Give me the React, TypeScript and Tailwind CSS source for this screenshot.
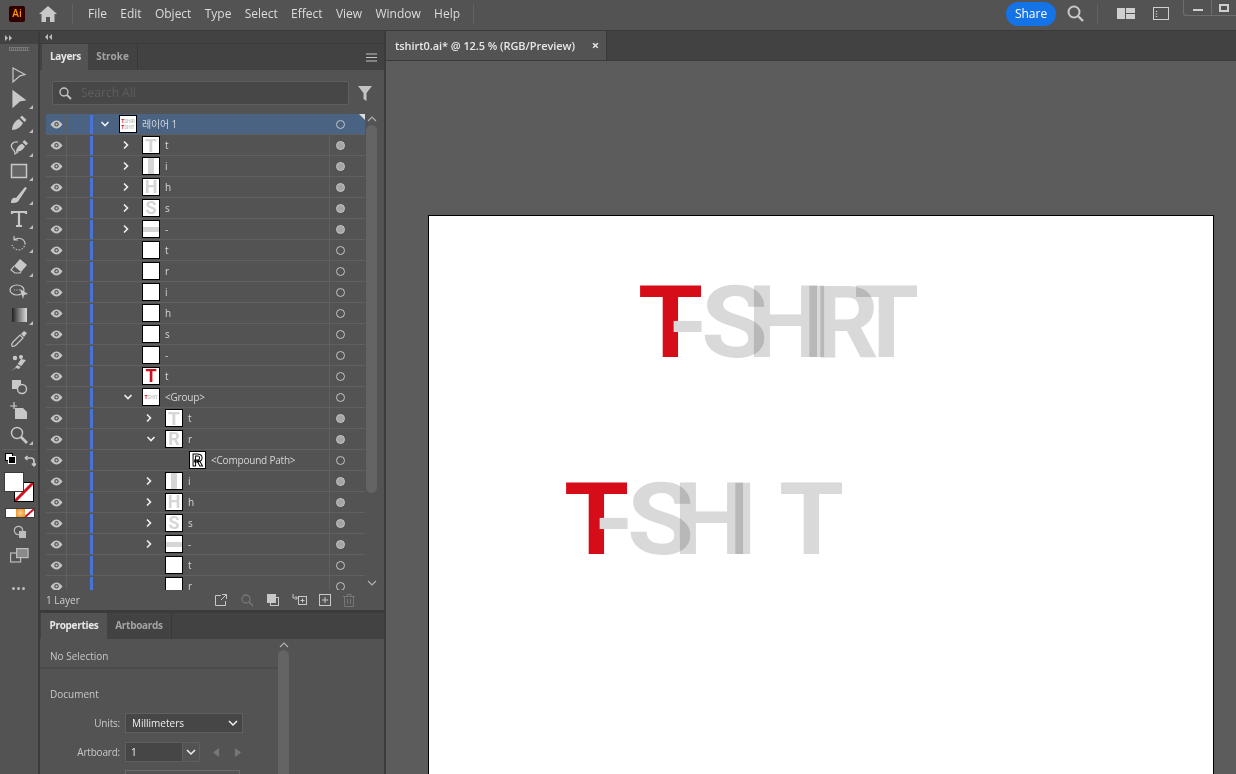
import type { ReactNode } from "react";

const UI = "font-['Open_Sans','Noto_Sans_CJK_KR',sans-serif]";

type Thumb = "blank" | "T" | "I" | "H" | "S" | "-" | "red" | "R" | "layer" | "group" | "path";
type Row = { level: 0 | 1 | 2 | 3; open?: boolean; shut?: boolean; thumb: Thumb; label: string; filled?: boolean };

const rows: Row[] = [
  { level: 0, open: true, thumb: "layer", label: "레이어 1" },
  { level: 1, shut: true, thumb: "T", label: "t", filled: true },
  { level: 1, shut: true, thumb: "I", label: "i", filled: true },
  { level: 1, shut: true, thumb: "H", label: "h", filled: true },
  { level: 1, shut: true, thumb: "S", label: "s", filled: true },
  { level: 1, shut: true, thumb: "-", label: "-", filled: true },
  { level: 1, thumb: "blank", label: "t" },
  { level: 1, thumb: "blank", label: "r" },
  { level: 1, thumb: "blank", label: "i" },
  { level: 1, thumb: "blank", label: "h" },
  { level: 1, thumb: "blank", label: "s" },
  { level: 1, thumb: "blank", label: "-" },
  { level: 1, thumb: "red", label: "t" },
  { level: 1, open: true, thumb: "group", label: "<Group>" },
  { level: 2, shut: true, thumb: "T", label: "t", filled: true },
  { level: 2, open: true, thumb: "R", label: "r", filled: true },
  { level: 3, thumb: "path", label: "<Compound Path>" },
  { level: 2, shut: true, thumb: "I", label: "i", filled: true },
  { level: 2, shut: true, thumb: "H", label: "h", filled: true },
  { level: 2, shut: true, thumb: "S", label: "s", filled: true },
  { level: 2, shut: true, thumb: "-", label: "-", filled: true },
  { level: 2, thumb: "blank", label: "t" },
  { level: 2, thumb: "blank", label: "r" },
];

const indent = {
  0: "pl-[5px]",
  1: "pl-[26px]",
  2: "pl-[49px]",
  3: "pl-[96px]",
};
const chevronBox = { 0: "w-[21px]", 1: "w-[23px]", 2: "w-[23px]", 3: "w-0" };
const thumbLetter = "font-['Roboto',sans-serif] font-bold text-[#d6d6d6] leading-none";

function ThumbBox({ kind, level }: { kind: Thumb; level: number }) {
  const size = level >= 3 ? "w-[17px] h-[18px]" : "w-[18px] h-[18px]";
  return (
    <div className={`${size} shrink-0 bg-white border border-black flex items-center justify-center overflow-hidden`}>
      {kind === "T" && <span className={`${thumbLetter} text-[19px]`}>T</span>}
      {kind === "I" && <div className="w-[6px] h-full bg-[#d6d6d6]" />}
      {kind === "H" && <span className={`${thumbLetter} text-[18px]`}>H</span>}
      {kind === "S" && <span className={`${thumbLetter} text-[18px]`}>S</span>}
      {kind === "R" && <span className={`${thumbLetter} text-[18px]`}>R</span>}
      {kind === "-" && <div className="w-full h-[5px] bg-[#d6d6d6]" />}
      {kind === "red" && <span className="font-['Roboto',sans-serif] font-bold text-[#d20f1c] text-[18px] leading-none">T</span>}
      {kind === "path" && (
        <span className="font-['Roboto',sans-serif] font-bold text-white text-[17px] leading-none [-webkit-text-stroke:1px_black]">R</span>
      )}
      {(kind === "layer" || kind === "group") && (
        <div className="flex flex-col font-['Roboto',sans-serif] font-bold text-[5px] leading-[6px] text-[#c9c9c9] tracking-[-0.2px]">
          {kind === "layer" && (
            <span>
              <span className="text-[#d20f1c]">T</span>SHIR
            </span>
          )}
          <span>
            <span className="text-[#d20f1c]">T</span>SHIT
          </span>
        </div>
      )}
    </div>
  );
}

function Eye() {
  return (
    <svg width="13" height="9" viewBox="0 0 13 9">
      <path d="M0.5 4.5C2.5 1.6 4.4 0.5 6.5 0.5s4 1.1 6 4c-2 2.9-3.9 4-6 4s-4-1.1-6-4z" fill="#c4c4c4" />
      <circle cx="6.5" cy="4.3" r="2.2" fill="#555" />
      <circle cx="6.5" cy="4.3" r="1.1" fill="#c4c4c4" />
    </svg>
  );
}

function Chevron({ open, nudge }: { open?: boolean; nudge?: boolean }) {
  return (
    <div className={`w-[14px] flex justify-center ${nudge ? "ml-[2px]" : ""}`}>
      <svg width="10" height="10" viewBox="0 0 10 10" fill="none" stroke="#f0f0f0" strokeWidth="1.6">
        {open ? <path d="M1.5 3l3.5 3.5L8.5 3" /> : <path d="M3 1.5L6.5 5 3 8.5" />}
      </svg>
    </div>
  );
}

function LayerRow({ row, selected }: { row: Row; selected: boolean }) {
  return (
    <div className={`relative h-[21px] shrink-0 flex items-center border-b border-[#606060] ${selected ? "bg-[#4b6382]" : ""}`}>
      <div className="w-[21px] h-full flex items-center justify-center border-r border-[#606060]">
        <Eye />
      </div>
      <div className="w-[21px] h-full border-r border-transparent" />
      <div className="w-[3px] h-[19px] ml-[2px] bg-[#4a73d8]" />
      <div className={`flex-1 h-full flex items-center min-w-0 ${indent[row.level]}`}>
        <div className={`${chevronBox[row.level]} shrink-0`}>
          {row.open || row.shut ? <Chevron open={row.open} nudge={row.open && row.level > 0} /> : null}
        </div>
        <ThumbBox kind={row.thumb} level={row.level} />
        <span className={`ml-[5px] text-[10px] tracking-[-0.2px] whitespace-nowrap ${selected ? "text-[#cfd6df]" : "text-[#d6d6d6]"}`}>
          {row.label}
        </span>
      </div>
      <div className={`w-[36px] h-full flex items-center pl-[6px] border-l ${selected ? "border-transparent" : "border-[#606060]"}`}>
        <div className={`w-[9px] h-[9px] rounded-full border border-[#c4c4c4] ${row.filled ? "bg-[#a5a5a5] border-[#a5a5a5]" : ""}`} />
      </div>
      {selected && (
        <div className="absolute right-0 top-0 w-0 h-0 border-t-[6px] border-l-[6px] border-t-[#dcdcdc] border-l-transparent" />
      )}
    </div>
  );
}

function ToolIcon({ children, corner = true }: { children: ReactNode; corner?: boolean }) {
  return (
    <div className="relative h-[24px] flex items-center justify-center">
      <svg width="20" height="20" viewBox="0 0 20 20" fill="none" stroke="#c8c8c8" strokeWidth="1.2">
        {children}
      </svg>
      {corner && (
        <div className="absolute right-[5px] bottom-[2px] w-0 h-0 border-b-[4px] border-l-[4px] border-b-[#bdbdbd] border-l-transparent" />
      )}
    </div>
  );
}

function Toolbar() {
  return (
    <div className="w-[40px] shrink-0 bg-[#535353] border-r-2 border-[#3b3b3b] flex flex-col">
      <div className="h-[13px] bg-[#424242] flex items-center pl-[5px]">
        <svg width="8" height="6" viewBox="0 0 8 6" fill="#bdbdbd">
          <path d="M0 0l3 3-3 3zM4 0l3 3-3 3z" />
        </svg>
      </div>
      <div className="mt-[3px] mx-[9px] h-[4px] border-y border-[#777] bg-[repeating-linear-gradient(90deg,#777_0,#777_1px,transparent_1px,transparent_2px)]" />
      <div className="mt-[12px] flex flex-col">
        <ToolIcon corner={false}><path d="M4 3l12 6.5-5 1.4L4 17z" /></ToolIcon>
        <ToolIcon><path d="M4 2l12 9-5.5 1L4 18z" fill="#c8c8c8" /></ToolIcon>
        <ToolIcon>
          <path d="M3 17C3 12 6 8 10 6l4 4c-2 4-6 7-11 7z" fill="#c8c8c8" stroke="none" />
          <path d="M11 4.5l2-2 4.5 4.5-2 2z" fill="#c8c8c8" stroke="none" />
        </ToolIcon>
        <ToolIcon>
          <path d="M7 15c0-4 3-7 6-8.500l3 3c-2 3-5 5.500-9 5.500z" fill="#c8c8c8" stroke="none" />
          <path d="M13.500 5l2-2 3.500 3.500-2 2z" fill="#c8c8c8" stroke="none" />
          <path d="M9 5C4 4 1 8 3 11c2 3 3 2 3 6l3-2" />
        </ToolIcon>
        <ToolIcon><rect x="2.5" y="3.5" width="15" height="13" fill="#666" stroke="#c8c8c8" strokeWidth="1.5" /></ToolIcon>
        <ToolIcon><path d="M2 18c0-4 2-6 5-5l9-11 2 1-8 12c-1 3-5 3-8 3z" fill="#c8c8c8" stroke="none" /></ToolIcon>
        <ToolIcon><path d="M3 5V3h14v2M10 3v14M7 17h6" strokeWidth="2.2" /></ToolIcon>
        <ToolIcon>
          <path d="M16 10c0 4-3 7-6 7s-6-2-7-5" strokeDasharray="1.5 1.5" />
          <path d="M5 3v4h4M5 7c3-3 10-2 11 3" />
        </ToolIcon>
        <ToolIcon>
          <path d="M11 2l7 6-6 7-7-6z" fill="#c8c8c8" stroke="none" />
          <path d="M5 9l-3 4 4 3h5l1-1" />
        </ToolIcon>
        <ToolIcon corner={false}>
          <ellipse cx="8" cy="9" rx="7" ry="5" />
          <path d="M11 8l8 5-4 1-1 4z" fill="#c8c8c8" stroke="none" />
          <path d="M5 9h6" strokeDasharray="1 1.5" />
        </ToolIcon>
        <ToolIcon>
          <defs>
            <linearGradient id="toolGrad">
              <stop offset="0" stopColor="#222" />
              <stop offset="1" stopColor="#ddd" />
            </linearGradient>
          </defs>
          <rect x="3" y="3" width="15" height="14" fill="url(#toolGrad)" stroke="none" />
        </ToolIcon>
        <ToolIcon corner={false}>
          <path d="M3 17c-1-2 0-3 1-4l7-7 3 3-7 7c-1 1-3 2-4 1z" />
          <path d="M12 5l3-3 3 2-3 4z" fill="#c8c8c8" stroke="none" />
        </ToolIcon>
        <ToolIcon corner={false}>
          <path d="M2 18l4-3 6-9 5 1-7 9-3-1" fill="#c8c8c8" stroke="none" />
          <circle cx="6" cy="5" r="1.6" fill="#c8c8c8" />
          <circle cx="12" cy="4" r="1.4" fill="#c8c8c8" />
          <path d="M3 9l12 6" stroke="#535353" />
        </ToolIcon>
        <ToolIcon corner={false}>
          <rect x="3" y="3" width="9" height="9" fill="#c8c8c8" stroke="none" />
          <circle cx="13" cy="12" r="4.5" fill="#535353" strokeWidth="1.4" />
        </ToolIcon>
        <ToolIcon corner={false}>
          <path d="M5 1v7M1 5h7" />
          <path d="M6 7h8l4 4v7H6z" fill="#c8c8c8" stroke="none" />
        </ToolIcon>
        <ToolIcon>
          <circle cx="8" cy="8" r="5.5" strokeWidth="1.4" />
          <path d="M12 12l6 6" strokeWidth="2.6" />
        </ToolIcon>
      </div>
      <div className="mt-[2px] mx-[2px] border-t border-[#606060]" />
      <div className="relative h-[145px]">
        {/* default colors + swap */}
        <div className="absolute left-[5px] top-[3px] w-[8px] h-[8px] bg-white border border-black" />
        <div className="absolute left-[8px] top-[6px] w-[8px] h-[8px] bg-black border border-white" />
        <svg className="absolute left-[24px] top-[5px]" width="12" height="12" viewBox="0 0 12 12" fill="none" stroke="#c8c8c8" strokeWidth="1.6">
          <path d="M1 3h6c2 0 3 1 3 3v5M1 3l2.5-2M1 3l2.5 2M10 11L8 8.5M10 11l2-2.5" />
        </svg>
        {/* stroke none */}
        <div className="absolute left-[14px] top-[32px] w-[20px] h-[20px] bg-white border border-black overflow-hidden">
          <svg width="18" height="18" viewBox="0 0 18 18">
            <path d="M0 18L18 0" stroke="#d2101f" strokeWidth="3" />
          </svg>
        </div>
        {/* fill */}
        <div className="absolute left-[4px] top-[22px] w-[20px] h-[20px] bg-white border border-[#3b3b3b]" />
        {/* color / gradient / none */}
        <div className="absolute left-[5px] top-[58px] flex border border-[#3b3b3b] h-[10px]">
          <div className="w-[10px] bg-white" />
          <div className="w-[9px] bg-[radial-gradient(circle,#ffd080,#e58a2a)]" />
          <div className="w-[9px] bg-white overflow-hidden">
            <svg width="9" height="8" viewBox="0 0 9 8">
              <path d="M0 8L9 0" stroke="#d2101f" strokeWidth="2" />
            </svg>
          </div>
        </div>
        <svg className="absolute left-[13px] top-[75px]" width="14" height="14" viewBox="0 0 14 14">
          <circle cx="5.5" cy="5.5" r="4.2" fill="none" stroke="#bdbdbd" strokeWidth="1.2" />
          <rect x="6" y="6" width="7" height="7" fill="#bdbdbd" />
        </svg>
        <svg className="absolute left-[10px] top-[98px]" width="19" height="15" viewBox="0 0 19 15" fill="none" stroke="#bdbdbd" strokeWidth="1.2">
          <rect x="0.6" y="5" width="10" height="9" />
          <rect x="6.6" y="0.6" width="11.5" height="9" fill="#8a8a8a" />
        </svg>
        <div className="absolute left-[12px] top-[137px] flex gap-[2px]">
          <div className="w-[3px] h-[3px] rounded-full bg-[#bdbdbd]" />
          <div className="w-[3px] h-[3px] rounded-full bg-[#bdbdbd]" />
          <div className="w-[3px] h-[3px] rounded-full bg-[#bdbdbd]" />
        </div>
      </div>
    </div>
  );
}

function TopBar() {
  const menus = ["File", "Edit", "Object", "Type", "Select", "Effect", "View", "Window", "Help"];
  return (
    <div className="h-[31px] shrink-0 bg-[#535353] border-b border-[#3a3a3a] flex items-center pb-[3px]">
      <div className="ml-[9px] w-[16px] h-[16px] rounded-[2px] bg-[#330000] flex items-center justify-center text-[10px] font-semibold text-[#ff9a00]">
        Ai
      </div>
      <svg className="ml-[14px]" width="18" height="16" viewBox="0 0 18 16" fill="#c8c8c8">
        <path d="M9 0L0 8h2.5v8h4.5v-5h4v5h4.5V8H18z" />
      </svg>
      <div className="ml-[15px] w-px h-[20px] bg-[#626262]" />
      <div className="ml-[15px] flex gap-[13.3px] text-[12px] text-[#dcdcdc]">
        {menus.map((m) => (
          <span key={m}>{m}</span>
        ))}
      </div>
      <div className="ml-[13px] w-px h-[20px] bg-[#626262]" />
      <div className="ml-auto h-[24px] w-[50px] rounded-full bg-[#1473e6] text-white text-[12px] flex items-center justify-center">Share</div>
      <svg className="ml-[11px]" width="17" height="17" viewBox="0 0 17 17" fill="none" stroke="#c8c8c8">
        <circle cx="7" cy="7" r="5.5" strokeWidth="2" />
        <path d="M11 11l5 5" strokeWidth="2.4" />
      </svg>
      <div className="ml-[13px] w-px h-[20px] bg-[#626262]" />
      <svg className="ml-[19px]" width="18" height="13" viewBox="0 0 18 13" fill="#cfcfcf">
        <rect x="0" y="1" width="8" height="11" />
        <rect x="9" y="1" width="9" height="5" />
        <rect x="9" y="7" width="9" height="5" />
      </svg>
      <svg className="ml-[18px]" width="16" height="13" viewBox="0 0 16 13" fill="none" stroke="#cfcfcf">
        <rect x="0.5" y="0.5" width="15" height="12" />
        <path d="M3.5 4v1M3.5 6.5v1M3.5 9v1" strokeWidth="1.4" />
      </svg>
      <div className="ml-[14px] self-start h-[16px] w-[53px] border-l border-b border-[#6e6e6e] rounded-bl-[3px] flex items-center">
        <div className="w-[28px] h-full border-r border-[#6e6e6e] flex items-center justify-center">
          <div className="w-[10px] h-[2px] mt-[4px] bg-[#cfcfcf]" />
        </div>
        <div className="flex-1 flex items-center justify-center">
          <div className="w-[10px] h-[8px] border-2 border-[#cfcfcf]" />
        </div>
      </div>
    </div>
  );
}

function LayersPanel() {
  return (
    <div className="h-[566px] shrink-0 bg-[#535353] flex flex-col">
      <div className="h-[26px] shrink-0 bg-[#424242] flex items-end">
        <div className="ml-[2px] h-[26px] w-[46px] bg-[#535353] flex items-center justify-center pb-[2px] pl-[1px] text-[10px] font-bold tracking-[-0.3px] text-[#e8e8e8]">
          Layers
        </div>
        <div className="h-[26px] w-[50px] border-r border-[#383838] flex items-center justify-center pb-[2px] text-[10px] font-bold text-[#a3a3a3]">
          Stroke
        </div>
        <svg className="ml-auto mr-[7px] mb-[8px]" width="11" height="9" viewBox="0 0 11 9" stroke="#c4c4c4">
          <path d="M0 1h11M0 4.5h11M0 8h11" />
        </svg>
      </div>
      <div className="h-[44px] shrink-0 flex items-center pl-[12px] pt-[2px]">
        <div className="w-[297px] h-[24px] rounded-[2px] bg-[#474747] border border-[#5f5f5f] flex items-center pl-[5px]">
          <svg width="14" height="14" viewBox="0 0 14 14" fill="none" stroke="#c4c4c4" strokeWidth="1.4">
            <circle cx="6" cy="6" r="4" />
            <path d="M9 9l4 4" strokeWidth="1.8" />
          </svg>
          <span className="ml-[9px] text-[12px] text-[#5e5e5e]">Search All</span>
        </div>
        <svg className="ml-[9px]" width="14" height="15" viewBox="0 0 14 15" fill="#c4c4c4">
          <path d="M0 0h14L8.5 7v8l-3-2V7z" />
        </svg>
      </div>
      <div className="flex-1 min-h-0 flex pl-[6px] pr-[6px]">
        <div className="w-[319px] h-[476px] overflow-hidden flex flex-col">
          {rows.map((r, i) => (
            <LayerRow key={i} row={r} selected={i === 0} />
          ))}
        </div>
        <div className="w-[13px] h-[476px] flex flex-col items-center">
          <svg className="mt-[2px]" width="10" height="6" viewBox="0 0 10 6" fill="none" stroke="#b0b0b0" strokeWidth="1.2">
            <path d="M1 5l4-4 4 4" />
          </svg>
          <div className="mt-[3px] w-[11px] h-[368px] rounded-full bg-[#646464]" />
          <svg className="mt-auto mb-[4px]" width="10" height="6" viewBox="0 0 10 6" fill="none" stroke="#b0b0b0" strokeWidth="1.2">
            <path d="M1 1l4 4 4-4" />
          </svg>
        </div>
      </div>
      <div className="h-[20px] shrink-0 flex items-center pl-[6px] text-[10px] text-[#cfcfcf] relative">
        <span>1 Layer</span>
        <div className="ml-[134px] flex items-center gap-[12px]">
          <svg width="14" height="14" viewBox="0 0 14 14" fill="none" stroke="#c8c8c8">
            <path d="M7 2.5H1.5v10h10V8M8 1.5h4.5V6M12.5 1.5L7 7" />
          </svg>
          <svg width="14" height="14" viewBox="0 0 14 14" fill="none" stroke="#777">
            <circle cx="6" cy="6" r="4" strokeWidth="1.3" />
            <path d="M9 9l4 4" strokeWidth="1.6" />
          </svg>
          <svg width="14" height="14" viewBox="0 0 14 14" fill="none" stroke="#c8c8c8">
            <rect x="4.5" y="4.5" width="8" height="8" />
            <rect x="1.5" y="1.5" width="8" height="8" fill="#c8c8c8" />
          </svg>
          <svg width="15" height="14" viewBox="0 0 15 14" fill="none" stroke="#c8c8c8">
            <path d="M1 1v4h4M3.5 3l2 2-2 2" />
            <rect x="6.5" y="3.5" width="8" height="8" />
            <path d="M10.5 5.5v4M8.5 7.5h4" />
          </svg>
          <svg width="12" height="12" viewBox="0 0 12 12" fill="none" stroke="#c8c8c8">
            <rect x="0.5" y="0.5" width="11" height="11" />
            <path d="M6 3v6M3 6h6" />
          </svg>
          <svg width="12" height="13" viewBox="0 0 12 13" fill="none" stroke="#777">
            <path d="M0 2.5h12M4 2.5V.5h4v2M1.5 2.5v10h9v-10M4.5 5v5M7.5 5v5" />
          </svg>
        </div>
      </div>
    </div>
  );
}

function PropertiesPanel() {
  return (
    <div className="flex-1 min-h-0 mt-[2px] bg-[#535353] flex flex-col overflow-hidden border-t border-[#3b3b3b]">
      <div className="h-[26px] shrink-0 bg-[#424242] flex">
        <div className="ml-[1px] w-[66px] bg-[#535353] flex items-center justify-center pb-[2px] text-[10px] font-bold tracking-[-0.3px] text-[#e8e8e8]">
          Properties
        </div>
        <div className="w-[65px] border-r border-[#383838] flex items-center justify-center pb-[2px] text-[10px] font-bold tracking-[-0.3px] text-[#a3a3a3]">
          Artboards
        </div>
      </div>
      <div className="flex flex-1 min-h-0">
        <div className="w-[238px] shrink-0 text-[10px] text-[#c8c8c8]">
          <div className="h-[30px] flex items-center pl-[10px] border-b-[2px] border-[#4b4b4b] pt-[7px]">No Selection</div>
          <div className="pl-[10px] pt-[18px]">Document</div>
          <div className="mt-[11px] flex items-center h-[20px]">
            <span className="w-[80px] text-right tracking-[-0.2px]">Units:</span>
            <div className="ml-[5px] w-[118px] h-[20px] bg-[#464646] border border-[#5f5f5f] flex items-center pl-[6px] pr-[4px] text-[#f0f0f0]">
              <span>Millimeters</span>
              <svg className="ml-auto" width="10" height="7" viewBox="0 0 10 7" fill="none" stroke="#f0f0f0" strokeWidth="1.5">
                <path d="M1 1l4 4 4-4" />
              </svg>
            </div>
          </div>
          <div className="mt-[9px] flex items-center h-[20px]">
            <span className="w-[80px] text-right tracking-[-0.2px]">Artboard:</span>
            <div className="ml-[5px] w-[75px] h-[20px] border border-[#5f5f5f] flex text-[#f0f0f0]">
              <div className="w-[56px] bg-[#464646] pl-[5px] leading-[18px]">1</div>
              <div className="flex-1 border-l border-[#5f5f5f] flex items-center justify-center">
                <svg width="10" height="7" viewBox="0 0 10 7" fill="none" stroke="#f0f0f0" strokeWidth="1.5">
                  <path d="M1 1l4 4 4-4" />
                </svg>
              </div>
            </div>
            <svg className="ml-[13px]" width="7" height="9" viewBox="0 0 7 9" fill="#777">
              <path d="M6 0v9L0 4.5z" />
            </svg>
            <svg className="ml-[14px]" width="7" height="9" viewBox="0 0 7 9" fill="#777">
              <path d="M1 0v9l6-4.5z" />
            </svg>
          </div>
          <div className="mt-[8px] ml-[85px] w-[115px] h-[20px] border border-[#6a6a6a]" />
        </div>
        <div className="w-[11px] flex flex-col items-center">
          <svg className="mt-[3px]" width="10" height="6" viewBox="0 0 10 6" fill="none" stroke="#b0b0b0" strokeWidth="1.2">
            <path d="M1 5l4-4 4 4" />
          </svg>
          <div className="mt-[2px] w-[11px] flex-1 rounded-t-full bg-[#646464]" />
        </div>
      </div>
    </div>
  );
}

const artLetter = "absolute top-0 origin-left leading-none font-['Roboto',sans-serif] font-bold text-[101px] select-none";

function TshirtArt({ second, className }: { second?: boolean; className: string }) {
  return (
    <div className={`absolute w-[300px] h-[100px] ${className}`}>
      <span className={`${artLetter} left-[-1px] scale-x-[1.04] text-[#d60d19]`}>T</span>
      <span className={`${artLetter} left-[29px] text-[#d9d9d9]`}>-</span>
      <span className={`${artLetter} left-[62px] scale-x-[1.08] text-[#d9d9d9]`}>S</span>
      <span className={`${artLetter} left-[108px] scale-x-[1.08] text-[#d9d9d9] mix-blend-multiply`}>H</span>
      <span className={`${artLetter} left-[163px] text-[#d9d9d9] mix-blend-multiply`}>I</span>
      {!second && <span className={`${artLetter} left-[175px] text-[#d9d9d9] mix-blend-multiply`}>R</span>}
      <span className={`${artLetter} ${second ? "left-[214px]" : "left-[215px]"} scale-x-[1.04] text-[#d9d9d9] mix-blend-multiply`}>T</span>
    </div>
  );
}

export default function App() {
  return (
    <div className={`h-screen w-full flex flex-col overflow-hidden bg-[#3b3b3b] ${UI}`}>
      <TopBar />
      <div className="flex-1 min-h-0 flex">
        <Toolbar />
        <div className="w-[344px] shrink-0 flex flex-col">
          <div className="h-[13px] shrink-0 bg-[#424242] border-b border-[#3b3b3b] flex items-center pl-[5px]">
            <svg width="8" height="6" viewBox="0 0 8 6" fill="#bdbdbd">
              <path d="M3 0L0 3l3 3zM7 0L4 3l3 3z" />
            </svg>
          </div>
          <LayersPanel />
          <PropertiesPanel />
        </div>
        <div className="flex-1 min-w-0 ml-[2px] flex flex-col">
          <div className="h-[30px] shrink-0 bg-[#424242] border-b border-[#3a3a3a] flex">
            <div className="w-[220px] bg-[#535353] flex items-center pl-[9px] pr-[7px] pt-[1px] text-[11px] font-semibold tracking-[-0.06px] text-[#e8e8e8]">
              <span>tshirt0.ai* @ 12.5 % (RGB/Preview)</span>
              <span className="ml-auto text-[13px] font-bold">×</span>
            </div>
            <div className="w-px bg-[#383838]" />
          </div>
          <div className="flex-1 min-h-0 bg-[#5c5c5c] pl-[42px] pt-[154px]">
            <div className="relative w-[786px] h-[600px] bg-white border border-black">
              <TshirtArt className="left-[210px] top-[56px]" />
              <TshirtArt second className="left-[136px] top-[253px]" />
            </div>
          </div>
        </div>
      </div>
    </div>
  );
}
